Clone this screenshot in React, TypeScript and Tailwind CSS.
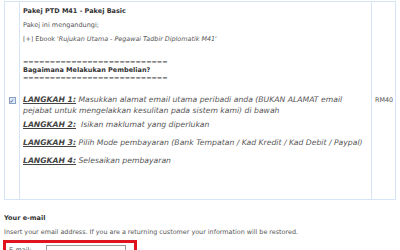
import React from "react";

const F = { fontFamily: '"DejaVu Sans", Verdana, sans-serif' } as React.CSSProperties;

export default function App() {
  return (
    <div className="relative w-[400px] h-[250px] overflow-hidden bg-white text-[#444]" style={F}>
      <div className="ml-[4px] mr-[4px] mt-[1px] h-[199px] flex border border-[#d6e4f7]">
        <div className="w-[15px] border-r border-[#d6e4f7] flex items-center justify-center">
          <div className="w-[7px] h-[7px] border border-[#8aa0c0] bg-[#dfe8f5] flex items-center justify-center text-[6px] leading-[6px] text-[#3050a0]">✓</div>
        </div>
        <div className="w-[352px] border-r border-[#d6e4f7] pl-[3px] flex flex-col">
          <div className="mt-[3px] h-[12px] leading-[12px] text-[6.5px] font-bold text-[#333]">Pakej PTD M41 - Pakej Basic</div>
          <div className="mt-[2px] h-[12px] leading-[12px] text-[6.5px] text-[#555]">Pakej ini mengandungi;</div>
          <div className="mt-[2px] h-[12px] leading-[12px] text-[6.4px] text-[#555]">
            [+] Ebook <span className="italic">'Rujukan Utama - Pegawai Tadbir Diplomatik M41'</span>
          </div>
          <div className="mt-[13px] h-[8px] leading-[8px] text-[6.4px] text-[#666]">===========================</div>
          <div className="h-[8px] leading-[8px] text-[6.5px] font-bold text-[#333]">Bagaimana Melakukan Pembelian?</div>
          <div className="h-[8px] leading-[8px] text-[6.4px] text-[#666]">===========================</div>
          <div className="mt-[12px] pr-[2px] leading-[11px] text-[7.7px] italic text-[#555]">
            <span className="font-bold underline text-[#444]">LANGKAH 1:</span> Masukkan alamat email utama peribadi anda (BUKAN ALAMAT email pejabat untuk mengelakkan kesulitan pada sistem kami) di bawah
          </div>
          <div className="mt-[3px] h-[11px] leading-[11px] text-[7.7px] italic text-[#555] whitespace-nowrap">
            <span className="font-bold underline text-[#444]">LANGKAH 2:</span>&nbsp; Isikan maklumat yang diperlukan
          </div>
          <div className="mt-[7px] h-[11px] leading-[11px] text-[7.7px] italic text-[#555] whitespace-nowrap">
            <span className="font-bold underline text-[#444]">LANGKAH 3:</span> Pilih Mode pembayaran (Bank Tempatan / Kad Kredit / Kad Debit / Paypal)
          </div>
          <div className="mt-[7px] h-[11px] leading-[11px] text-[7.7px] italic text-[#555] whitespace-nowrap">
            <span className="font-bold underline text-[#444]">LANGKAH 4:</span> Selesaikan pembayaran
          </div>
        </div>
        <div className="flex-1 flex items-center pl-[3px] text-[6.4px] text-[#555]">RM40</div>
      </div>
      <div className="ml-[4px] mt-[13px] h-[10px] leading-[10px] text-[6.5px] font-bold text-[#333]">Your e-mail</div>
      <div className="ml-[4px] mt-[4px] h-[10px] leading-[10px] text-[6.4px] text-[#555] whitespace-nowrap">Insert your email address. If you are a returning customer your information will be restored.</div>
      <div className="ml-[3px] mt-[3px] w-[134px] h-[20px] border-[3px] border-[#e0141e] flex items-start pt-[2px] pl-[3px]">
        <span className="text-[6.5px] leading-[10px] text-[#555] w-[37px]">E-mail:</span>
        <div className="w-[80px] h-[12px] border border-[#999] bg-white" />
      </div>
    </div>
  );
}
